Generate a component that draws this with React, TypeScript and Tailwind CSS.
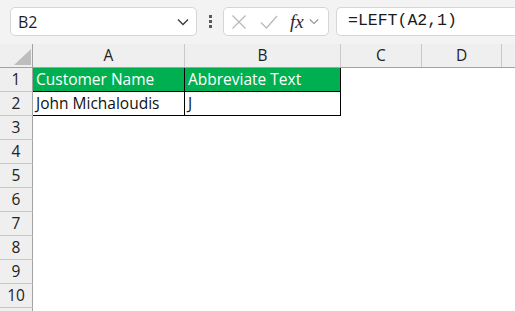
import React from 'react';

const COLS = [
  { id: 'A', w: 'w-[152px]' },
  { id: 'B', w: 'w-[156px]' },
  { id: 'C', w: 'w-[81px]' },
  { id: 'D', w: 'w-[80px]' },
];

const ROWS = [1, 2, 3, 4, 5, 6, 7, 8, 9, 10, 11];

function Chevron({ className }: { className?: string }) {
  return (
    <svg viewBox="0 0 12 8" className={className} fill="none" stroke="currentColor" strokeWidth="1.3">
      <path d="M1 1.5 L6 6.5 L11 1.5" />
    </svg>
  );
}

function FormulaBar() {
  return (
    <div className="h-[44px] bg-[#f3f3f3] flex items-start pt-[7px] pl-[10px]">
      {/* name box */}
      <div className="w-[187px] h-[29px] bg-white border border-[#d6d6d6] rounded-[5px] flex items-center pl-[7px] pr-[7px]">
        <span className="flex-1 text-[16px] text-[#1f1f1f] font-['Open_Sans',sans-serif]">B2</span>
        <Chevron className="w-[12px] h-[8px] text-[#3a3a3a]" />
      </div>

      {/* dots */}
      <div className="w-[26px] h-[29px] flex flex-col items-center justify-center gap-[2px]">
        <div className="w-[3px] h-[3px] bg-[#5a5a5a]" />
        <div className="w-[3px] h-[3px] bg-[#5a5a5a]" />
        <div className="w-[3px] h-[3px] bg-[#5a5a5a]" />
      </div>

      {/* cancel / enter / fx */}
      <div className="w-[106px] h-[29px] bg-white border border-[#d6d6d6] rounded-[5px] flex items-center pl-[7px]">
        <svg viewBox="0 0 16 16" className="w-[16px] h-[16px] text-[#b8b8b8]" fill="none" stroke="currentColor" strokeWidth="1.2">
          <path d="M1.5 1.5 L14.5 14.5 M14.5 1.5 L1.5 14.5" />
        </svg>
        <svg viewBox="0 0 18 14" className="w-[18px] h-[14px] ml-[13px] text-[#b8b8b8]" fill="none" stroke="currentColor" strokeWidth="1.2">
          <path d="M1 7.5 L6.5 13 L17 1" />
        </svg>
        <span className="ml-[12px] text-[19px] italic font-['Liberation_Serif',serif] text-[#2a2a2a] leading-none">fx</span>
        <Chevron className="w-[10px] h-[7px] ml-[5px] text-[#8a8a8a]" />
      </div>

      {/* formula */}
      <div className="ml-[7px] flex-1 h-[29px] bg-white border border-r-0 border-[#d6d6d6] rounded-l-[5px] flex items-center pl-[11px]">
        <span className="text-[16.5px] text-[#1a1a1a] font-['Liberation_Mono',monospace]">=LEFT(A2,1)</span>
      </div>
    </div>
  );
}

function HeaderRow() {
  return (
    <div className="flex h-[24px] bg-[#efefef] border-b border-[#a3a3a3]">
      <div className="w-[33px] h-full border-r border-[#a3a3a3] relative">
        <svg viewBox="0 0 17 16" className="absolute left-[14px] top-[5px] w-[17px] h-[16px]">
          <path d="M17 0 L17 16 L0 16 Z" fill="#bdbdbd" />
        </svg>
      </div>
      {COLS.map((c) => (
        <div key={c.id} className={`${c.w} h-full border-r border-[#c9c9c9] flex items-center justify-center text-[15.5px] text-[#222] font-['Open_Sans',sans-serif]`}>
          {c.id}
        </div>
      ))}
      <div className="flex-1" />
    </div>
  );
}

function DataRow({ n }: { n: number }) {
  const head = n === 1;
  const data = n === 2;
  const inTable = head || data;
  return (
    <div className="flex h-[24px]">
      <div className="w-[33px] h-full bg-[#efefef] border-r border-b border-r-[#a3a3a3] border-b-[#c6c6c6] flex items-center justify-center text-[15.5px] text-[#222] font-['Open_Sans',sans-serif]">
        {n <= 10 ? n : ''}
      </div>
      <div
        className={`w-[152px] h-full flex items-center pl-[3px] text-[15.5px] font-['Open_Sans',sans-serif] ${
          inTable ? 'border-r border-b border-black' : ''
        } ${head ? 'bg-[#00b050] text-white' : 'bg-white text-[#111]'}`}
      >
        {head ? 'Customer Name' : data ? 'John Michaloudis' : ''}
      </div>
      <div
        className={`w-[156px] h-full flex items-center pl-[3px] text-[15.5px] font-['Open_Sans',sans-serif] ${
          inTable ? 'border-r border-b border-black' : ''
        } ${head ? 'bg-[#00b050] text-white' : 'bg-white text-[#111]'}`}
      >
        {head ? 'Abbreviate Text' : data ? 'J' : ''}
      </div>
      <div className="flex-1 bg-white" />
    </div>
  );
}

export default function App() {
  return (
    <div className="w-[515px] h-[311px] overflow-hidden bg-white">
      <FormulaBar />
      <HeaderRow />
      {ROWS.map((n) => (
        <DataRow key={n} n={n} />
      ))}
    </div>
  );
}
